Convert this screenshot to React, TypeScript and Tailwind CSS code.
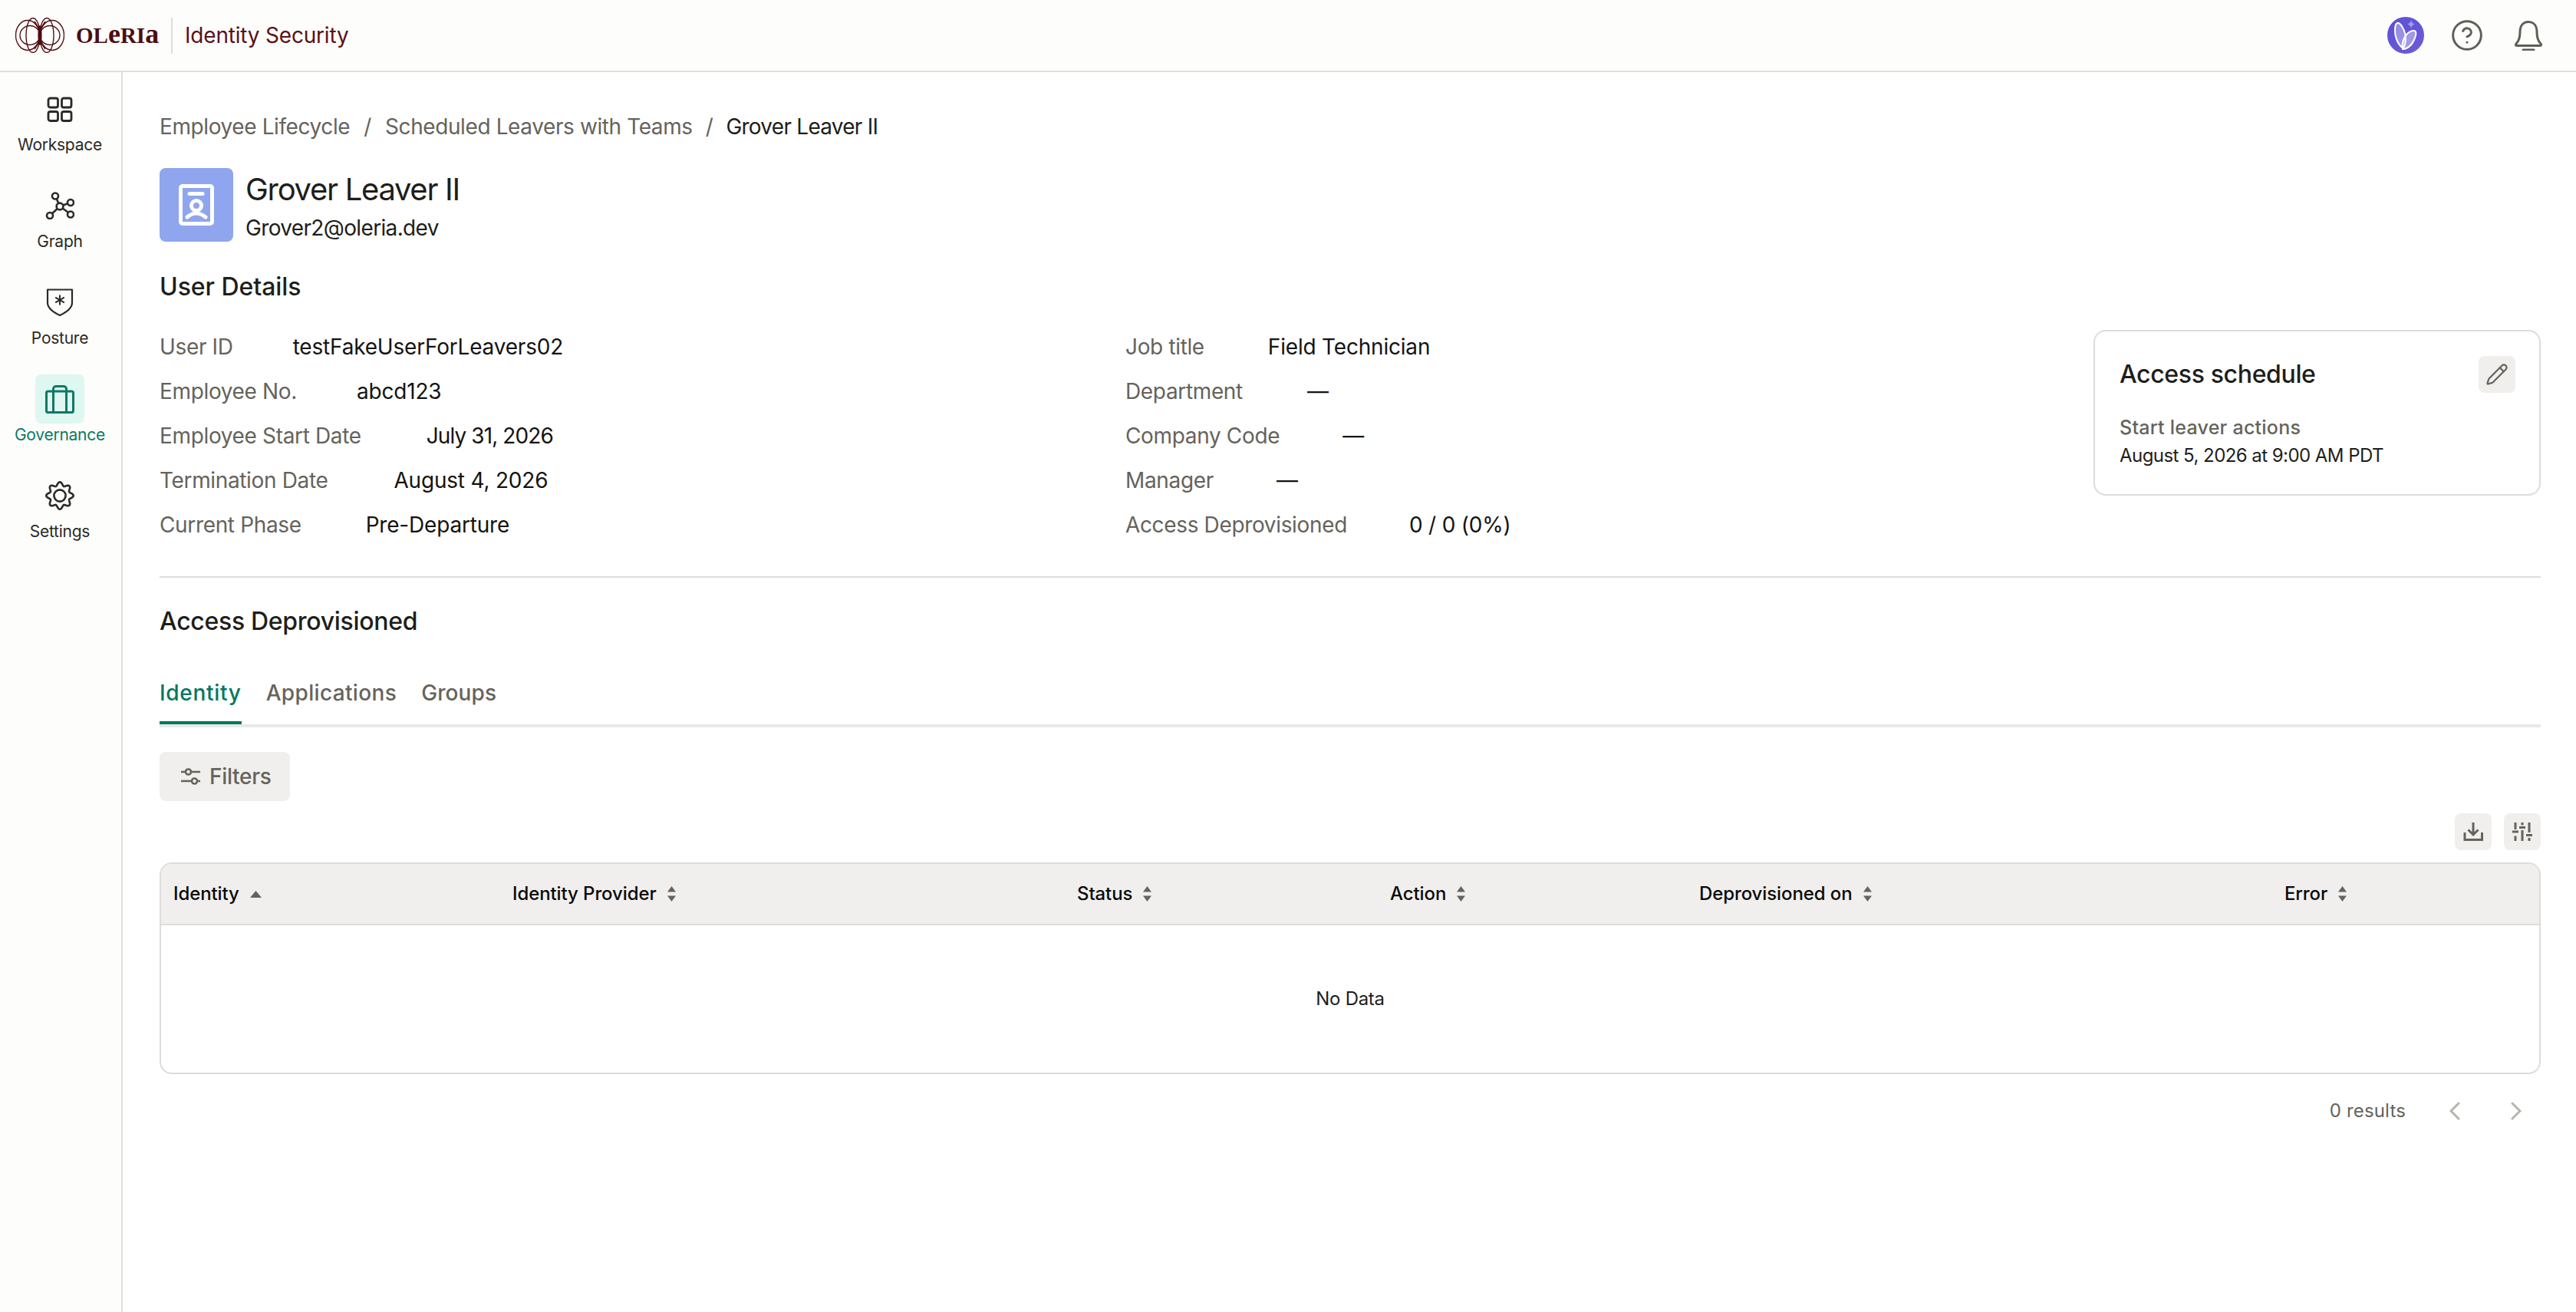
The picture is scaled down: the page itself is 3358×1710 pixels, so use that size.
import React from "react";
import { CircleHelp, Pencil } from "lucide-react";

const gearPoints = Array.from({ length: 144 }, (_, i) => {
  const t = (i / 144) * Math.PI * 2;
  const r = 15.4 + 2.3 * Math.cos(8 * t);
  return `${(19 + r * Math.cos(t)).toFixed(2)},${(19 + r * Math.sin(t)).toFixed(2)}`;
}).join(" ");

function WorkspaceIcon() {
  return (
    <svg width="34" height="33" viewBox="0 0 34 33" fill="none" stroke="#2a2a27" strokeWidth="2.8">
      <rect x="2" y="2" width="12.5" height="12" rx="2.5" />
      <rect x="19.5" y="2" width="12.5" height="12" rx="2.5" />
      <rect x="2" y="19.5" width="12.5" height="12" rx="2.5" />
      <rect x="19.5" y="19.5" width="12.5" height="12" rx="2.5" />
    </svg>
  );
}
function GraphIcon() {
  return (
    <svg width="38" height="36" viewBox="0 0 38 36" fill="none" stroke="#2a2a27" strokeWidth="2.6">
      <path d="M19 19L13 5M19 19L33 14M19 19L33 29M19 19L6 31" />
      <g fill="#fdfdfb">
        <circle cx="13" cy="5.5" r="4" />
        <circle cx="33" cy="14" r="4" />
        <circle cx="19" cy="19" r="4.4" />
        <circle cx="33" cy="29.5" r="4" />
        <circle cx="6" cy="31" r="4" />
      </g>
    </svg>
  );
}
function PostureIcon() {
  return (
    <svg width="36" height="38" viewBox="0 0 36 38" fill="none" stroke="#2a2a27" strokeWidth="2.2" strokeLinejoin="round">
      <path d="M2 2.5h32v17c0 7.5-7.5 12.5-16 16.5C9.5 32 2 27 2 19.5z" />
      <path d="M18 9.5v13M12.2 12.7l11.6 6.6M23.8 12.7l-11.6 6.6" strokeWidth="2" />
    </svg>
  );
}
function GovernanceIcon() {
  return (
    <svg width="38" height="37" viewBox="0 0 38 37" fill="none" stroke="#0b7a64" strokeWidth="3" strokeLinejoin="round">
      <rect x="1.5" y="8" width="35" height="27.5" rx="2" />
      <path d="M10.5 8v27.5M27.5 8v27.5M10.5 8V5c0-2 1.5-3.5 3.5-3.5h10c2 0 3.5 1.5 3.5 3.5v3" />
    </svg>
  );
}
function SettingsIcon() {
  return (
    <svg width="38" height="38" viewBox="0 0 38 38" fill="none" stroke="#2a2a27" strokeWidth="2.6" strokeLinejoin="round">
      <polygon points={gearPoints} />
      <circle cx="19" cy="19" r="7.6" />
    </svg>
  );
}

function Logo() {
  const lobes = [1, -1].flatMap((s) => [
    <ellipse key={`a${s}`} cx={32 - s * 16} cy="23" rx="15.5" ry="19.5" />,
    <ellipse key={`b${s}`} cx={32 - s * 13} cy="23" rx="13" ry="12.5" />,
    <ellipse key={`c${s}`} cx={32 - s * 9} cy="23" rx="9" ry="22.5" />,
  ]);
  return (
    <svg width="64" height="46" viewBox="0 0 64 46" fill="none" stroke="#4d0d10" strokeWidth="1.35">
      {lobes}
      <ellipse cx="32" cy="23" rx="2.6" ry="13" fill="#4d0d10" stroke="none" />
      <path d="M25 5 32 16 39 5M25 41 32 30 39 41" strokeWidth="1.4" />
    </svg>
  );
}

function AvatarIcon() {
  return (
    <svg width="48" height="48" viewBox="0 0 48 48">
      <defs>
        <linearGradient id="av" x1="0" y1="0" x2="1" y2="1">
          <stop offset="0" stopColor="#5a4fd8" />
          <stop offset="1" stopColor="#6e5cd6" />
        </linearGradient>
      </defs>
      <circle cx="24" cy="24" r="24" fill="url(#av)" />
      <path d="M21 41C12 36 8 20 11 10C13 6 17 8 20 14C25 22 25 34 21 41Z" fill="#fff" fillOpacity=".35" stroke="#fff" strokeWidth="2" />
      <path d="M20 42C18 32 24 20 33 18C39 17 38 24 35 30C32 37 26 42 20 42Z" fill="#fff" fillOpacity=".4" stroke="#fff" strokeWidth="2" />
      <path d="M31 4Q31.5 8 35.5 9.5Q31.5 11 31 15Q30.5 11 26.5 9.5Q30.5 8 31 4Z" fill="#a59bf0" />
    </svg>
  );
}

function BellIcon() {
  return (
    <svg width="36" height="39" viewBox="0 0 36 39" fill="none" stroke="#5f5e57" strokeWidth="3" strokeLinecap="round">
      <path d="M18 1.5C10 1.5 7 8 7 15C7 22 5 27 2 30C.8 31.5 1.5 32.5 3 32.5H33C34.5 32.5 35.2 31.5 34 30C31 27 29 22 29 15C29 8 26 1.5 18 1.5Z" />
      <path d="M11 38H25" />
    </svg>
  );
}

function BadgeIcon() {
  return (
    <svg width="46" height="54" viewBox="0 0 46 54" fill="none" stroke="#fff" strokeWidth="5" strokeLinecap="round">
      <rect x="2.5" y="2.5" width="41" height="49" rx="2.5" />
      <path d="M14 12.5H31" />
      <circle cx="23" cy="28" r="6.5" />
      <path d="M11 43Q22.5 33 35 43" />
    </svg>
  );
}

function SortBoth() {
  return (
    <svg width="11" height="20" viewBox="0 0 11 20" fill="#65635c">
      <path d="M5.5 0 11 7.5H0z" />
      <path d="M5.5 20 0 12.5H11z" />
    </svg>
  );
}
function SortUp() {
  return (
    <svg width="15" height="9" viewBox="0 0 15 9" fill="#65635c">
      <path d="M7.5 0 15 9H0z" />
    </svg>
  );
}
function FilterIcon() {
  return (
    <svg width="26" height="24" viewBox="0 0 26 24" fill="none" stroke="#65635c" strokeWidth="2.6">
      <path d="M0 6H6M13 6H25M0 18H14M21 18H25" />
      <circle cx="9.5" cy="6" r="3.5" />
      <circle cx="17.5" cy="18" r="3.5" />
    </svg>
  );
}
function DownloadIcon() {
  return (
    <svg width="26" height="26" viewBox="0 0 26 26" fill="none" stroke="#65635c" strokeWidth="3">
      <path d="M2 14V23.5H24.5V14" />
      <path d="M13 1V17M6.5 10.5 13 17l6.5-6.5" />
    </svg>
  );
}
function ColumnsIcon() {
  return (
    <svg width="26" height="25" viewBox="0 0 26 25" fill="none" stroke="#65635c" strokeWidth="3">
      <path d="M4 0V9M4 17.5V24M13 0V3.5M13 10V24M22 0V13M22 20V24" />
      <path d="M0 12H8M9 6.5H17M18 16.5H26" />
    </svg>
  );
}
function Chevron({ flip }: { flip?: boolean }) {
  return (
    <svg width="14" height="24" viewBox="0 0 14 24" fill="none" stroke="#b5b4af" strokeWidth="3" strokeLinecap="round">
      <path d={flip ? "M2 2 12 12 2 22" : "M12 2 2 12 12 22"} />
    </svg>
  );
}

const navItems = [
  { label: "Workspace", icon: <WorkspaceIcon /> },
  { label: "Graph", icon: <GraphIcon /> },
  { label: "Posture", icon: <PostureIcon /> },
  { label: "Governance", icon: <GovernanceIcon />, active: true },
  { label: "Settings", icon: <SettingsIcon /> },
];

function Row({ label, value, gap, tight }: { label: string; value: string; gap: string; tight?: boolean }) {
  return (
    <div className={`flex h-[40px] items-center text-[28px] leading-[40px] ${gap}`}>
      <span className="text-[#65635c] tracking-[-0.35px]">{label}</span>
      <span className={`text-[#141412] ${tight ? "tracking-[-0.9px]" : "tracking-[-0.2px]"}`}>{value}</span>
    </div>
  );
}

const columns = [
  { label: "Identity", sorted: true },
  { label: "Identity Provider" },
  { label: "Status" },
  { label: "Action" },
  { label: "Deprovisioned on" },
  { label: "Error" },
];

export default function App() {
  return (
    <div className="flex h-[1710px] w-full flex-col overflow-hidden bg-white [font-family:Inter,sans-serif] text-[#1e1e1b]">
      <header className="flex h-[94px] shrink-0 items-center justify-between border-b-2 border-[#e0dfdb] bg-[#fdfdfb] pl-[20px] pr-[44px]">
        <div className="flex items-center">
          <Logo />
          <span className="ml-[15px] flex w-[107px] items-baseline text-[29px] leading-[40px] font-bold text-[#4d0d10] [font-family:'Liberation_Serif',serif]">
            OL<span className="text-[36px] leading-[30px]">e</span>RI<span className="text-[36px] leading-[30px]">a</span>
          </span>
          <div className="ml-[17px] h-[47px] w-[2px] bg-[#dfdedb]" />
          <span className="ml-[16px] text-[28px] leading-[40px] tracking-[-0.2px] text-[#5a1216]">Identity Security</span>
        </div>
        <div className="flex items-center">
          <AvatarIcon />
          <CircleHelp size={44} strokeWidth={1.6} color="#5f5e57" className="ml-[34px]" />
          <div className="ml-[40px]">
            <BellIcon />
          </div>
        </div>
      </header>
      <div className="flex min-h-0 flex-1">
        <aside className="flex w-[160px] shrink-0 flex-col items-center gap-[32px] border-r-2 border-[#e0dfdb] bg-[#fdfdfb] pt-[16px] pr-[2px]">
          {navItems.map((n) => (
            <div key={n.label} className="flex flex-col items-center">
              <div className={`flex h-[64px] w-[64px] items-center justify-center rounded-[8px] ${n.active ? "bg-[#dff7f1]" : ""}`}>
                {n.icon}
              </div>
              <span className={`text-[21px] leading-[30px] tracking-[-0.25px] ${n.active ? "text-[#0b7a64]" : "text-[#2a2a27]"}`}>{n.label}</span>
            </div>
          ))}
        </aside>
        <main className="flex min-w-0 flex-1 flex-col pl-[48px] pr-[46px] pt-[51px]">
          <nav className="flex h-[40px] items-center text-[28px] leading-[40px] tracking-[-0.4px] text-[#65635c]">
            <span>Employee Lifecycle</span>
            <span className="mx-[18px]">/</span>
            <span>Scheduled Leavers with Teams</span>
            <span className="mx-[17px]">/</span>
            <span className="tracking-[-0.75px] text-[#1e1e1b]">Grover Leaver II</span>
          </nav>
          <div className="mt-[34px] flex h-[96px] items-start gap-[16px]">
            <div className="flex h-[96px] w-[96px] items-center justify-center rounded-[8px] bg-[#8fa5ee]">
              <BadgeIcon />
            </div>
            <div className="flex flex-col pt-[3px]">
              <span className="text-[40px] leading-[50px] tracking-[-1.3px]">Grover Leaver II</span>
              <span className="mt-[5px] text-[28px] leading-[40px] tracking-[-0.65px]">Grover2@oleria.dev</span>
            </div>
          </div>
          <h2 className="mt-[37px] h-[44px] text-[32px] leading-[44px] font-medium tracking-[-0.05px]">User Details</h2>
          <div className="mt-[34px] flex items-start">
            <div className="flex w-[1259px] shrink-0 flex-col gap-[18px] pt-[2px]">
              <Row gap="gap-[78px]" label="User ID" value="testFakeUserForLeavers02" />
              <Row gap="gap-[78px]" label="Employee No." value="abcd123" />
              <Row gap="gap-[85px]" tight label="Employee Start Date" value="July 31, 2026" />
              <Row gap="gap-[86px]" label="Termination Date" value="August 4, 2026" />
              <Row gap="gap-[84px]" label="Current Phase" value="Pre-Departure" />
            </div>
            <div className="flex flex-1 flex-col gap-[18px] pt-[2px]">
              <Row gap="gap-[83px]" label="Job title" value="Field Technician" />
              <Row gap="gap-[84px]" label="Department" value="—" />
              <Row gap="gap-[82px]" label="Company Code" value="—" />
              <Row gap="gap-[82px]" label="Manager" value="—" />
              <Row gap="gap-[81px]" label="Access Deprovisioned" value="0 / 0 (0%)" />
            </div>
            <div className="h-[216px] w-[583px] shrink-0 rounded-[16px] border-2 border-[#dddcd9] bg-white pl-[32px] pr-[31px] pt-[32px]">
              <div className="flex h-[48px] items-center justify-between">
                <span className="text-[32px] leading-[44px] font-medium tracking-[-0.35px]">Access schedule</span>
                <div className="flex h-[48px] w-[48px] items-center justify-center rounded-[8px] bg-[#f0efed]">
                  <Pencil size={30} strokeWidth={1.8} color="#65635c" />
                </div>
              </div>
              <div className="mt-[27px] text-[25px] leading-[36px] font-medium tracking-[0.25px] text-[#65635c]">Start leaver actions</div>
              <div className="mt-[1px] text-[24px] leading-[36px] tracking-[-0.55px] text-[#1e1e1b]">August 5, 2026 at 9:00 AM PDT</div>
            </div>
          </div>
          <div className="mt-[47px] h-[2px] shrink-0 bg-[#dddcd9]" />
          <h2 className="mt-[35px] h-[44px] text-[32px] leading-[44px] font-medium tracking-[-0.3px]">Access Deprovisioned</h2>
          <div className="mt-[51px] flex gap-[32px] border-b-4 border-[#e8e8e6] text-[28px] leading-[40px] font-medium">
            <div className="h-[61px] border-b-4 border-[#00775f] tracking-[0.7px] text-[#00775f]">Identity</div>
            <div className="h-[61px] tracking-[0.35px] text-[#65635c]">Applications</div>
            <div className="h-[61px] tracking-[0.1px] text-[#65635c]">Groups</div>
          </div>
          <div className="mt-[32px]">
            <button className="flex h-[64px] w-[170px] items-center gap-[11px] rounded-[8px] bg-[#f0efed] pl-[28px] text-[28px] font-medium tracking-[-0.3px] text-[#65635c]">
              <FilterIcon />
              Filters
            </button>
          </div>
          <div className="mt-[16px] flex justify-end gap-[16px]">
            <div className="flex h-[48px] w-[48px] items-center justify-center rounded-[8px] bg-[#f0efed]">
              <DownloadIcon />
            </div>
            <div className="flex h-[48px] w-[48px] items-center justify-center rounded-[8px] bg-[#f0efed]">
              <ColumnsIcon />
            </div>
          </div>
          <div className="mt-[16px] flex h-[276px] flex-col overflow-hidden rounded-[16px] border-2 border-[#dddcd9]">
            <div className="grid h-[80px] shrink-0 grid-cols-[442px_736px_408px_403px_763px_1fr] items-center border-b-2 border-[#dddcd9] bg-[#f0efed] text-[24px] leading-[36px] font-medium tracking-[-0.1px] text-[#0a0a09]">
              {columns.map((c) => (
                <div key={c.label} className="flex items-center gap-[14px] pl-[16px]">
                  {c.label}
                  {c.sorted ? <SortUp /> : <SortBoth />}
                </div>
              ))}
            </div>
            <div className="flex flex-1 items-center justify-center text-[24px] tracking-[-0.3px] text-[#1e1e1b]">No Data</div>
          </div>
          <div className="mt-[24px] flex h-[48px] items-center justify-end pr-[8px]">
            <span className="mr-[40px] text-[24px] tracking-[0.15px] text-[#65635c]">0 results</span>
            <div className="flex h-[48px] w-[48px] items-center justify-center">
              <Chevron />
            </div>
            <div className="ml-[32px] flex h-[48px] w-[48px] items-center justify-center">
              <Chevron flip />
            </div>
          </div>
        </main>
      </div>
    </div>
  );
}
